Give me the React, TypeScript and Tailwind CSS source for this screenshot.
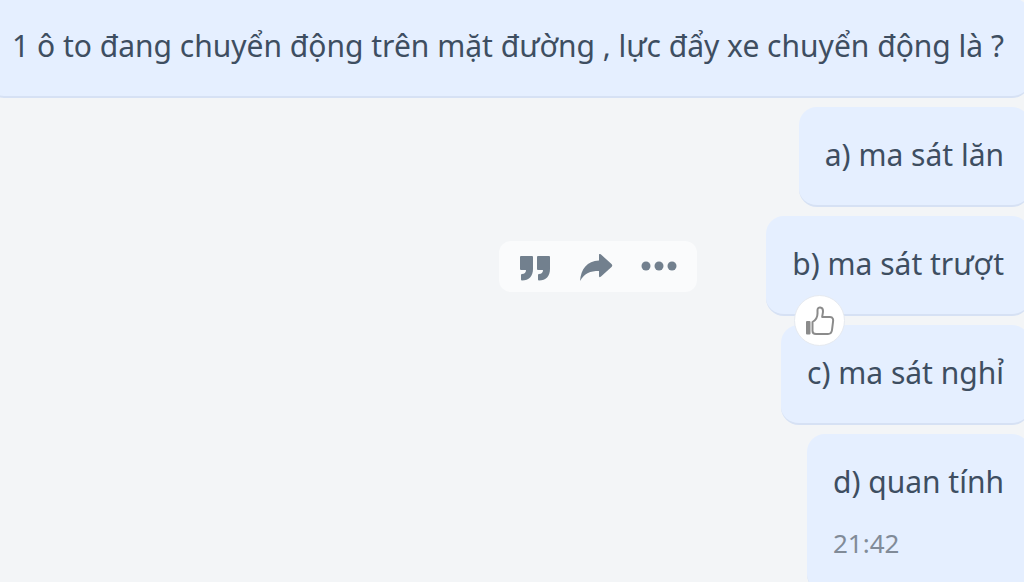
import React from 'react';
import { clsx } from 'clsx';

interface Message {
  id: string;
  text: string;
  time?: string;
  hovered?: boolean;
}

const messages: Message[] = [
  { id: 'q', text: '1 ô to đang chuyển động trên mặt đường , lực đẩy xe chuyển động là ?' },
  { id: 'a', text: 'a) ma sát lăn' },
  { id: 'b', text: 'b) ma sát trượt', hovered: true },
  { id: 'c', text: 'c) ma sát nghỉ' },
  { id: 'd', text: 'd) quan tính', time: '21:42' },
];

const QuoteIcon = () => (
  <svg width="32" height="28" viewBox="0 0 32 28" fill="currentColor" aria-hidden="true">
    <path d="M2 2h11q1 0 1 1v12c0 7-4 11.500-11 11.500q-1 0-1-1V21q0-1 1-1c2.500 0 4-1.500 4-4H2q-1 0-1-1V3q0-1 1-1z" />
    <path d="M19 2h11q1 0 1 1v12c0 7-4 11.500-11 11.500q-1 0-1-1V21q0-1 1-1c2.500 0 4-1.500 4-4h-5q-1 0-1-1V3q0-1 1-1z" />
  </svg>
);

const ShareIcon = () => (
  <svg width="34" height="28" viewBox="0 0 34 28" fill="currentColor" aria-hidden="true">
    <path d="M20 1q0-2 2-.5l10.500 9.500q1.500 1.500 0 3L22 22.500q-2 1.500-2-.5v-5C11 17 6 19 1 27 2 15 8 7 20 6.500z" />
  </svg>
);

const MoreIcon = () => (
  <svg width="36" height="28" viewBox="0 0 36 28" fill="currentColor" aria-hidden="true">
    <circle cx="5" cy="12" r="4.500" />
    <circle cx="18" cy="12" r="4.500" />
    <circle cx="31" cy="12" r="4.500" />
  </svg>
);

const LikeIcon = () => (
  <svg width="30" height="32" viewBox="0 0 30 32" fill="none" stroke="#8b8b8b" strokeWidth="2" strokeLinejoin="round" aria-hidden="true">
    <path d="M7.500 17c3.500-2 5-4.500 5-8.500V5c0-3.500 5.500-3.500 5.500 1 0 3-.8 4-.8 6H25c3 0 3.500 2.500 3 5l-1 8c-.4 3-1.500 4-4 4H11c-2 0-3.500-1-3.500-3z" />
    <path d="M2 17h2.500v11.500H2z" fill="#8b8b8b" />
  </svg>
);

const Toolbar = () => (
  <div className="flex h-[51px] items-center gap-7 rounded-xl bg-[#fafbfc] px-5 pt-[3px] text-[#72808e]">
    <button type="button" aria-label="Trả lời"><QuoteIcon /></button>
    <button type="button" aria-label="Chia sẻ"><ShareIcon /></button>
    <button type="button" aria-label="Thêm"><MoreIcon /></button>
  </div>
);

const Bubble: React.FC<{ message: Message }> = ({ message }) => (
  <div className="relative rounded-[18px] border-b-2 border-[#d6e1f4] bg-[#e5efff] px-[26px] pt-[27px] pb-[29px]">
    <p className="text-[30px] leading-[42px] whitespace-nowrap text-[#3e4e61]">{message.text}</p>
    {message.time && (
      <time className="mt-[22px] block text-[26px] leading-9 text-[#818b98]">{message.time}</time>
    )}
    {message.hovered && (
      <button
        type="button"
        aria-label="Thích"
        className="absolute -bottom-8 left-7 z-10 flex size-[51px] items-center justify-center rounded-full border border-[#e6eaf0] bg-white"
      >
        <LikeIcon />
      </button>
    )}
  </div>
);

const App: React.FC = () => (
  <main className="h-screen overflow-hidden bg-[#f3f5f7] font-['Noto_Sans',sans-serif]">
    {/* Sent messages hug the right edge and run slightly past it */}
    <div className="-mt-0.5 -mr-1.5 flex flex-col items-end gap-[9px]">
      {messages.map((message) => (
        <div key={message.id} className={clsx('flex items-center', message.hovered && 'gap-[69px]')}>
          {message.hovered && <Toolbar />}
          <Bubble message={message} />
        </div>
      ))}
    </div>
  </main>
);

export default App;
